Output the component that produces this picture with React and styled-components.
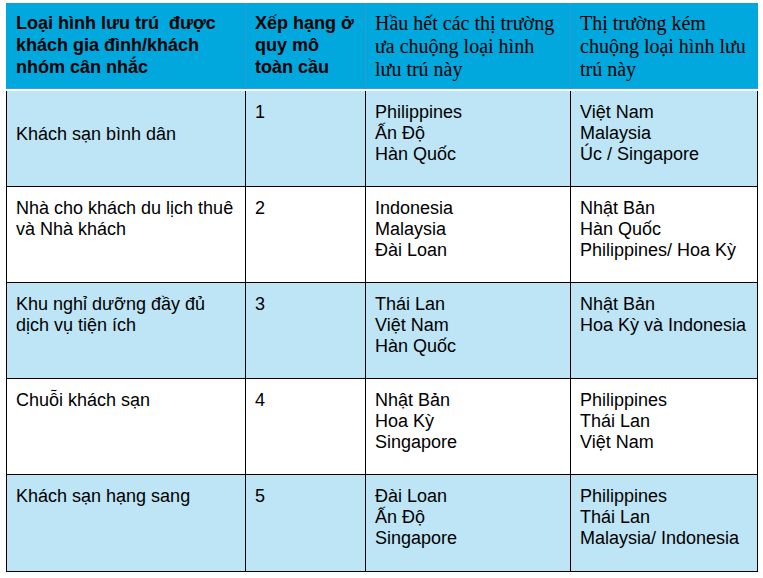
import styled, { createGlobalStyle } from 'styled-components';

const GlobalStyle = createGlobalStyle`
  html, body {
    margin: 0;
    padding: 0;
    background: #ffffff;
  }
`;

const Page = styled.div`
  padding: 3px 0 0 6px;
`;

const Table = styled.table`
  border-collapse: collapse;
  table-layout: fixed;
  width: 751px;
  font-family: "Liberation Sans", Arial, sans-serif;
  color: #000;
`;

const HeadCell = styled.th`
  box-sizing: border-box;
  background: #00a8de;
  height: 87px;
  padding: ${(p) => (p.$serif ? '9px' : '9px')} 9px 0 9px;
  text-align: left;
  vertical-align: top;
  border-left: 1px solid #2f9bd2;
  border-right: 1px solid #2f9bd2;
  border-bottom: 2px solid #ffffff;
  box-shadow: inset 0 -1px 0 #3a9ed6;
  font-family: ${(p) => (p.$serif ? '"Liberation Serif", "Times New Roman", serif' : '"Liberation Sans", Arial, sans-serif')};
  font-weight: ${(p) => (p.$serif ? 400 : 700)};
  font-size: ${(p) => (p.$serif ? '20px' : '18px')};
  line-height: ${(p) => (p.$serif ? '23px' : '22px')};
  &:first-child {
    border-left-color: #00a8de;
  }
  &:last-child {
    border-right-color: #00a8de;
  }
`;

const Row = styled.tr`
  background: ${(p) => (p.$tinted ? '#bde5f5' : '#ffffff')};
`;

const Cell = styled.td`
  height: ${(p) => (p.$last ? '97px' : '96px')};
  border: 1px solid #000;
  padding: ${(p) => (p.$shift ? '33px' : '11px')} 9px 0 9px;
  vertical-align: top;
  font-size: 18px;
  line-height: 21px;
  box-sizing: border-box;
`;

const rows = [
  {
    type: 'Khách sạn bình dân',
    rank: '1',
    liked: ['Philippines', 'Ấn Độ', 'Hàn Quốc'],
    disliked: ['Việt Nam', 'Malaysia', 'Úc / Singapore'],
    tinted: true,
    shift: true,
  },
  {
    type: ['Nhà cho khách du lịch thuê', 'và Nhà khách'],
    rank: '2',
    liked: ['Indonesia', 'Malaysia', 'Đài Loan'],
    disliked: ['Nhật Bản', 'Hàn Quốc', 'Philippines/ Hoa Kỳ'],
  },
  {
    type: ['Khu nghỉ dưỡng đầy đủ', 'dịch vụ tiện ích'],
    rank: '3',
    liked: ['Thái Lan', 'Việt Nam', 'Hàn Quốc'],
    disliked: ['Nhật Bản', 'Hoa Kỳ và Indonesia'],
    tinted: true,
  },
  {
    type: 'Chuỗi khách sạn',
    rank: '4',
    liked: ['Nhật Bản', 'Hoa Kỳ', 'Singapore'],
    disliked: ['Philippines', 'Thái Lan', 'Việt Nam'],
  },
  {
    type: 'Khách sạn hạng sang',
    rank: '5',
    liked: ['Đài Loan', 'Ấn Độ', 'Singapore'],
    disliked: ['Philippines', 'Thái Lan', 'Malaysia/ Indonesia'],
    tinted: true,
  },
];

const Lines = ({ items }) => {
  const list = Array.isArray(items) ? items : [items];
  return list.map((t, i) => (
    <span key={i}>
      {t}
      {i < list.length - 1 && <br />}
    </span>
  ));
};

export default function App() {
  return (
    <Page>
      <GlobalStyle />
      <Table>
        <colgroup>
          <col style={{ width: 239 }} />
          <col style={{ width: 120 }} />
          <col style={{ width: 205 }} />
          <col style={{ width: 187 }} />
        </colgroup>
        <thead>
          <tr>
            <HeadCell>
              Loại hình lưu trú&nbsp; được
              <br />
              khách gia đình/khách
              <br />
              nhóm cân nhắc
            </HeadCell>
            <HeadCell>
              Xếp hạng ở
              <br />
              quy mô
              <br />
              toàn cầu
            </HeadCell>
            <HeadCell $serif>
              Hầu hết các thị trường
              <br />
              ưa chuộng loại hình
              <br />
              lưu trú này
            </HeadCell>
            <HeadCell $serif>
              Thị trường kém
              <br />
              chuộng loại hình lưu
              <br />
              trú này
            </HeadCell>
          </tr>
        </thead>
        <tbody>
          {rows.map((r, i) => (
            <Row key={i} $tinted={r.tinted}>
              <Cell $shift={r.shift} $last={i === rows.length - 1}>
                <Lines items={r.type} />
              </Cell>
              <Cell $last={i === rows.length - 1}>{r.rank}</Cell>
              <Cell $last={i === rows.length - 1}>
                <Lines items={r.liked} />
              </Cell>
              <Cell $last={i === rows.length - 1}>
                <Lines items={r.disliked} />
              </Cell>
            </Row>
          ))}
        </tbody>
      </Table>
    </Page>
  );
}
